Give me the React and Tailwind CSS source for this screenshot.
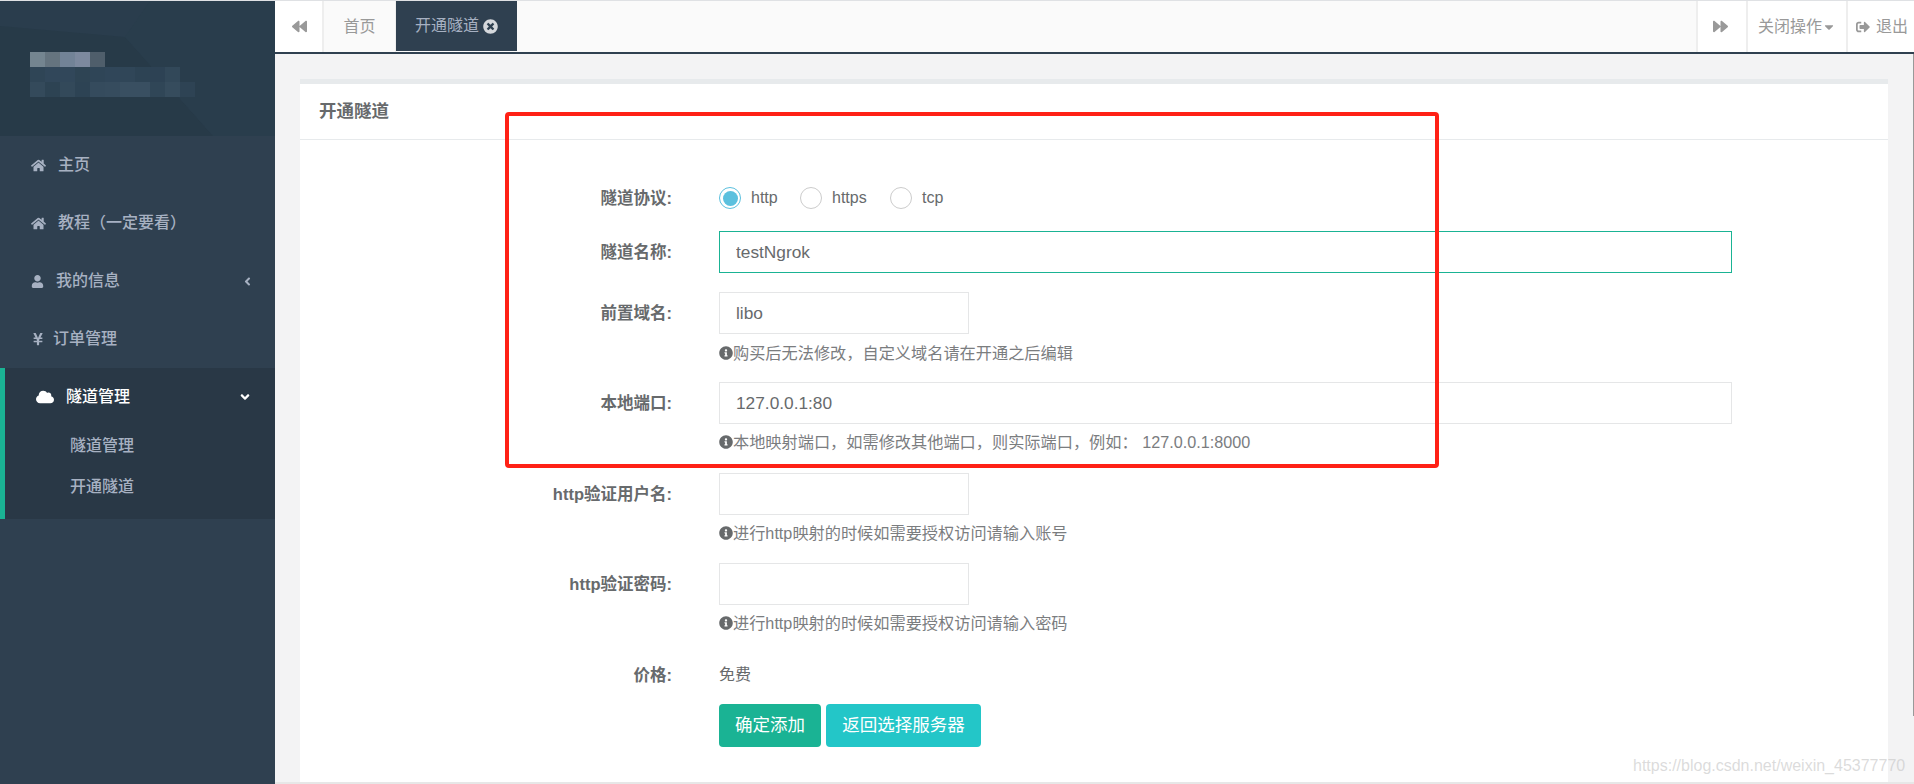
import React from "react";
import {
  FaHome, FaUser, FaYenSign, FaCloud, FaAngleLeft, FaAngleDown, FaBackward, FaForward,
  FaTimesCircle, FaInfoCircle, FaCaretDown, FaSignOutAlt,
} from "react-icons/fa";

// blurred-out logo blocks, one row of 15px cells each
const mosaic = [
  ["bg-[#748590]", "bg-[#65747f]", "bg-[#728397]", "bg-[#7c899e]", "bg-[#4f5e6b]"],
  ["bg-[#2f4556]", "bg-[#31475a]", "bg-[#31475a]", "bg-[#2e4454]", "bg-[#2f4557]", "bg-[#304659]", "bg-[#304658]", "bg-[#2d4354]", "bg-[#2d4254]", "bg-[#324859]"],
  ["bg-[#344a5b]", "bg-[#2d4353]", "bg-[#33495a]", "bg-[#2d4354]", "bg-[#354b5d]", "bg-[#364c5e]", "bg-[#394f61]", "bg-[#394f61]", "bg-[#304657]", "bg-[#364c5d]", "bg-[#2e4354]"],
];

const NavItem = ({ icon, label, gap = "w-[27px]", chevron }) => (
  <div className="h-[58px] flex items-center pl-[31px] pr-[21px] text-[16px] font-medium text-[#a7b1c2]">
    <span className={`${gap} shrink-0`}>{icon}</span>
    <span>{label}</span>
    {chevron && <FaAngleLeft size={13} className="ml-auto" />}
  </div>
);

const Sidebar = () => (
  <aside className="w-[275px] shrink-0 bg-[#2f4050]">
    <div className="relative h-[135px] bg-[#2a3d4d] overflow-hidden">
      <svg className="absolute inset-0" width="275" height="135" viewBox="0 0 275 135">
        <polygon points="0,25 125,36 150,64 213,135 0,135" fill="#273a48" />
        <polygon points="125,36 150,0 275,0 275,135 213,135 150,64" fill="#293d4c" />
      </svg>
      <div className="relative pt-[51px] pl-[30px]">
        {mosaic.map((cells, i) => (
          <div key={i} className="flex h-[15px]">
            {cells.map((c, j) => (
              <div key={j} className={`w-[15px] ${c}`} />
            ))}
          </div>
        ))}
      </div>
    </div>
    <NavItem icon={<FaHome size={15} />} label="主页" />
    <NavItem icon={<FaHome size={15} />} label="教程（一定要看）" />
    <NavItem icon={<FaUser size={13} />} label="我的信息" gap="w-[25px]" chevron />
    <NavItem icon={<FaYenSign size={14} />} label="订单管理" gap="w-[22px]" />
    <div className="h-[151px] bg-[#293846] border-l-[5px] border-[#1ab394]">
      <div className="h-[57px] flex items-center pl-[31px] pr-[23px] text-[16px] font-medium text-white">
        <FaCloud size={18} className="shrink-0" />
        <span className="ml-[12px]">隧道管理</span>
        <FaAngleDown size={14} className="ml-auto" />
      </div>
      <div className="pl-[65px] text-[16px] font-medium text-[#a7b1c2]">
        <div className="h-[41px] flex items-center">隧道管理</div>
        <div className="h-[41px] flex items-center">开通隧道</div>
      </div>
    </div>
  </aside>
);

const TabBar = () => (
  <div className="h-[53px] bg-[#fafafa] border-b-2 border-[#2f4050] flex text-[16px] text-[#999]">
    <div className="w-[49px] h-[51px] bg-white border-r-2 border-[#eeeeee] flex items-center justify-center">
      <FaBackward size={15} className="ml-[2px]" />
    </div>
    <div className="w-[72px] h-[51px] border-r border-[#eeeeee] flex items-center justify-center">首页</div>
    <div className="w-[121px] h-[50px] bg-[#2f4050] text-[#a7b1c2] flex items-center justify-center gap-[4px]">
      开通隧道
      <FaTimesCircle size={15} className="text-[#d5d8dc]" />
    </div>
    <div className="ml-auto w-[50px] h-[51px] bg-white border-l-2 border-[#eeeeee] flex items-center justify-center pr-[3px]">
      <FaForward size={15} />
    </div>
    <div className="w-[100px] h-[51px] bg-white border-l-2 border-[#eeeeee] flex items-center justify-center">
      关闭操作
      <FaCaretDown size={14} />
    </div>
    <div className="w-[68px] h-[51px] bg-white border-l-2 border-[#eeeeee] flex items-center justify-center gap-[6px] pl-[2px]">
      <FaSignOutAlt size={14} />
      退出
    </div>
  </div>
);

const Help = ({ children, className = "" }) => (
  <p className={`h-[24px] flex items-center text-[16.2px] text-[#7b7d7f] ${className}`}>
    <FaInfoCircle size={14} className="shrink-0 text-[#676a6c]" />
    {children}
  </p>
);

const FormRow = ({ label, className = "", children }) => (
  <div className={`flex ${className}`}>
    <label className="w-[372px] h-[42px] shrink-0 flex items-center justify-end text-[16.5px] font-bold text-[#676a6c]">
      {label}
    </label>
    <div className="ml-[47px] flex-1">{children}</div>
  </div>
);

const TextInput = ({ value, wide, active }) => (
  <input
    readOnly
    defaultValue={value}
    className={`block h-[42px] px-[16px] bg-white border text-[17.3px] text-[#676a6c] outline-none ${wide ? "w-[1013px]" : "w-[250px]"} ${active ? "border-[#1ab394]" : "border-[#e5e6e7]"}`}
  />
);

const Radio = ({ label, checked, width }) => (
  <div className={`flex items-center gap-[10px] text-[16px] text-[#676a6c] ${width}`}>
    <span className={`w-[22px] h-[22px] rounded-full border flex items-center justify-center ${checked ? "border-[#5bc0de]" : "border-[#cccccc]"}`}>
      {checked && <span className="w-[15px] h-[15px] rounded-full bg-[#5bc0de]" />}
    </span>
    {label}
  </div>
);

const TunnelForm = () => (
  <div className="pt-[37px]">
    <FormRow label="隧道协议:">
      <div className="h-[42px] flex items-center">
        <Radio label="http" checked width="w-[81px]" />
        <Radio label="https" width="w-[90px]" />
        <Radio label="tcp" />
      </div>
    </FormRow>
    <FormRow label="隧道名称:" className="mt-[12px]">
      <TextInput value="testNgrok" wide active />
    </FormRow>
    <FormRow label="前置域名:" className="mt-[19px]">
      <TextInput value="libo" />
      <Help className="mt-[7px]">购买后无法修改，自定义域名请在开通之后编辑</Help>
    </FormRow>
    <FormRow label="本地端口:" className="mt-[17px]">
      <TextInput value="127.0.0.1:80" wide />
      <Help className="mt-[6px]">本地映射端口，如需修改其他端口，则实际端口，例如： 127.0.0.1:8000</Help>
    </FormRow>
    <FormRow label="http验证用户名:" className="mt-[19px]">
      <TextInput value="" />
      <Help className="mt-[6px]">进行http映射的时候如需要授权访问请输入账号</Help>
    </FormRow>
    <FormRow label="http验证密码:" className="mt-[18px]">
      <TextInput value="" />
      <Help className="mt-[6px]">进行http映射的时候如需要授权访问请输入密码</Help>
    </FormRow>
    <FormRow label="价格:" className="mt-[19px]">
      <div className="h-[42px] flex items-center text-[16px] text-[#676a6c]">免费</div>
    </FormRow>
    <div className="mt-[8px] ml-[419px] flex gap-[5px] text-[17.5px] text-white">
      <button className="w-[102px] h-[43px] rounded-[4px] bg-[#1ab394]">确定添加</button>
      <button className="w-[155px] h-[43px] rounded-[4px] bg-[#23c6c8]">返回选择服务器</button>
    </div>
  </div>
);

export default function App() {
  return (
    <div className="relative w-[1914px] h-[784px] overflow-hidden border-t border-[#dfe1e4] font-['Liberation_Sans','Noto_Sans_CJK_SC',sans-serif]">
      <div className="flex h-[783px]">
        <Sidebar />
        <main className="flex-1 flex flex-col bg-[#f3f3f4]">
          <TabBar />
          <div className="flex-1 pt-[25px] pl-[25px] pr-[26px] border-b-2 border-[#e7e7e7]">
            <section className="h-full bg-white border-t-[5px] border-[#e7eaec]">
              <h2 className="h-[56px] px-[19px] flex items-center border-b border-[#e7eaec] text-[17.5px] font-bold text-[#676a6c]">
                开通隧道
              </h2>
              <TunnelForm />
            </section>
          </div>
        </main>
      </div>
      {/* red annotation drawn over the screenshot */}
      <div className="absolute left-[505px] top-[111px] w-[934px] h-[356px] border-4 border-[#ff2116] rounded-[4px]" />
      <div className="absolute right-0 top-[53px] w-px h-[662px] bg-[#999999]" />
      <div className="absolute left-[1633px] top-[753px] text-[16px] text-[#c4c4c4]/60">
        https://blog.csdn.net/weixin_45377770
      </div>
    </div>
  );
}
